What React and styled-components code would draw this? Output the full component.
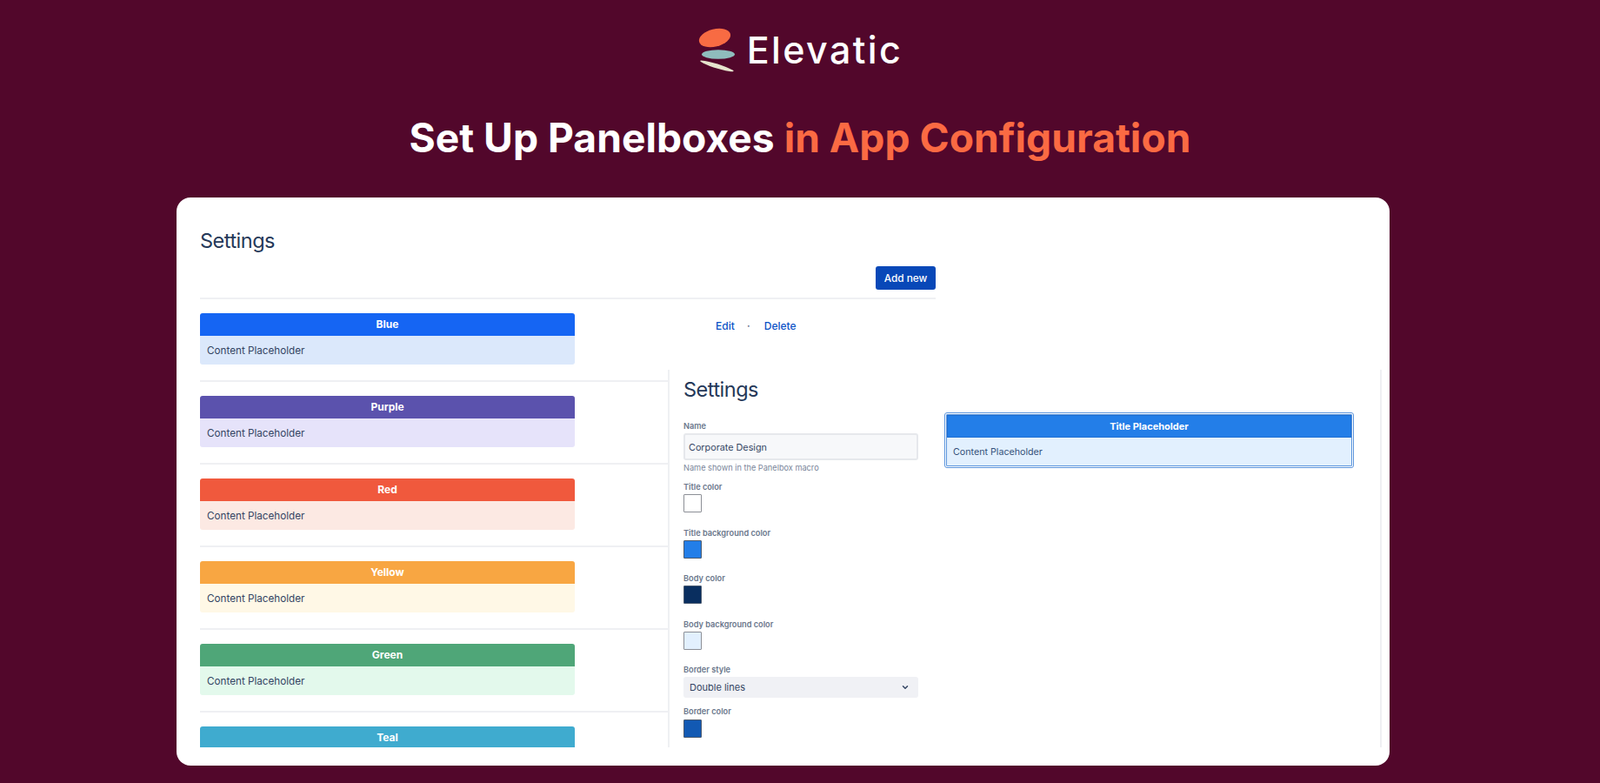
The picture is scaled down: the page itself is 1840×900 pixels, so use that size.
import React from 'react'
import styled, { createGlobalStyle } from 'styled-components'
import { ChevronDown } from 'lucide-react'

const GlobalStyle = createGlobalStyle`
  * {
    box-sizing: border-box;
  }
  html, body {
    margin: 0;
    height: 100%;
    background: #52072b;
    font-family: Inter, 'Liberation Sans', sans-serif;
  }
`

// panelbox colours used in the list, the last row is cut off below its title
const panels = [
  { name: 'Blue', head: '#1565f3', body: '#dbe8fb' },
  { name: 'Purple', head: '#5b52ad', body: '#e6e3fa' },
  { name: 'Red', head: '#f0593d', body: '#fce9e3' },
  { name: 'Yellow', head: '#f8a642', body: '#fff8e6' },
  { name: 'Green', head: '#4fa678', body: '#e3f9ec' },
  { name: 'Teal', head: '#3fabcf' },
]

const swatchesTop = [
  { label: 'Title color', color: '#ffffff', edge: '#8c8f96' },
  { label: 'Title background color', color: '#237ee8', edge: '#4a5a70' },
  { label: 'Body color', color: '#092e5f', edge: '#4a5a70' },
  { label: 'Body background color', color: '#e2f0fe', edge: '#8c8f96' },
]

const Logo = () => (
  <svg width="46" height="58" viewBox="0 0 46 58" aria-hidden="true">
    <ellipse cx="21" cy="15.5" rx="18.5" ry="10" fill="#f86b43" transform="rotate(-14 21 15.5)" />
    <ellipse cx="25" cy="34.5" rx="19" ry="5.2" fill="#8fbdbd" />
    <path d="M5 41.5 C17 42.5 32 47.5 42.5 53 C43 54.5 41 54.5 38 54 C26 52 12 47.5 5 43 C4 42.5 4 41.5 5 41.5 Z" fill="#e6e3cd" />
  </svg>
)

const App = () => {
  return (
    <Page>
      <GlobalStyle />
      <Brand>
        <Logo />
        <BrandName>Elevatic</BrandName>
      </Brand>
      <Headline>
        Set Up Panelboxes <Accent>in App Configuration</Accent>
      </Headline>
      <Card>
        <Viewport>
          <ListPage>
            <PageTitle>Settings</PageTitle>
            <Toolbar>
              <AddButton>Add new</AddButton>
            </Toolbar>
            {panels.map((panel, i) => (
              <Row key={panel.name}>
                <PanelBox>
                  <PanelHead $bg={panel.head}>{panel.name}</PanelHead>
                  {panel.body && <PanelBody $bg={panel.body}>Content Placeholder</PanelBody>}
                </PanelBox>
                {i === 0 && (
                  <Actions>
                    <ActionLink>Edit</ActionLink>
                    <Dot>·</Dot>
                    <ActionLink>Delete</ActionLink>
                  </Actions>
                )}
              </Row>
            ))}
          </ListPage>
        </Viewport>
        <EditPanel>
          <Form>
            <FormTitle>Settings</FormTitle>
            <Label>Name</Label>
            <NameInput readOnly value="Corporate Design" />
            <Helper>Name shown in the Panelbox macro</Helper>
            {swatchesTop.map((s) => (
              <SwatchField key={s.label}>
                <Label>{s.label}</Label>
                <Swatch $color={s.color} $edge={s.edge} />
              </SwatchField>
            ))}
            <Label>Border style</Label>
            <SelectBox>
              Double lines
              <ChevronDown size={10} strokeWidth={3.5} color="#344563" />
            </SelectBox>
            <BorderLabel>Border color</BorderLabel>
            <Swatch $color="#1259b3" $edge="#4a5a70" />
          </Form>
          <Preview>
            <PreviewHead>Title Placeholder</PreviewHead>
            <PreviewBody>Content Placeholder</PreviewBody>
          </Preview>
        </EditPanel>
      </Card>
    </Page>
  )
}

const Page = styled.div`
  width: 1840px;
  height: 900px;
  overflow: hidden;
  background: #52072b;
  padding-top: 28px;
`

const Brand = styled.div`
  display: flex;
  align-items: center;
  justify-content: center;
  gap: 12px;
  height: 58px;
  padding-right: 1px;
`

const BrandName = styled.div`
  color: #ffffff;
  font-size: 43px;
  font-weight: 500;
  letter-spacing: 2.4px;
  line-height: 58px;
`

const Headline = styled.h1`
  margin: 42px 0 0;
  height: 60px;
  text-align: center;
  color: #ffffff;
  font-size: 46.2px;
  font-weight: 700;
  line-height: 60px;
`

const Accent = styled.span`
  color: #fb6a43;
`

const Card = styled.div`
  position: relative;
  width: 1395px;
  height: 653px;
  margin: 39px 0 0 203px;
  padding: 0 27px 21px;
  background: #ffffff;
  border-radius: 16px;
`

const Viewport = styled.div`
  height: 632px;
  overflow: hidden;
`

const ListPage = styled.div`
  width: 846px;
`

const PageTitle = styled.div`
  padding-top: 35px;
  height: 79px;
  color: #253858;
  font-size: 23.5px;
  letter-spacing: -0.5px;
  line-height: 30px;
`

const Toolbar = styled.div`
  display: flex;
  justify-content: flex-end;
  height: 38px;
  border-bottom: 2px solid #eff0f3;
`

const AddButton = styled.button`
  width: 69px;
  height: 27px;
  padding: 0;
  border: 0;
  border-radius: 3px;
  background: #0848b8;
  color: #ffffff;
  font-family: inherit;
  font-size: 11.8px;
  font-weight: 500;
`

const Row = styled.div`
  display: flex;
  align-items: flex-start;
  height: 95px;
  padding-top: 16px;
  border-bottom: 2px solid #eff0f3;
`

const PanelBox = styled.div`
  width: 431px;
  height: 59px;
  flex: none;
  border-radius: 3px;
  overflow: hidden;
`

const PanelHead = styled.div`
  height: 26px;
  background: ${(p) => p.$bg};
  color: #ffffff;
  font-size: 12px;
  font-weight: 700;
  line-height: 26px;
  text-align: center;
`

const PanelBody = styled.div`
  height: 33px;
  padding-left: 8px;
  background: ${(p) => p.$bg};
  color: #344563;
  font-size: 11.7px;
  line-height: 34px;
`

const Actions = styled.div`
  display: flex;
  align-items: center;
  height: 28px;
  margin-left: 162px;
  font-size: 12px;
  font-weight: 500;
`

const ActionLink = styled.span`
  color: #0a52c6;
`

const Dot = styled.span`
  width: 34px;
  padding-right: 2px;
  text-align: center;
  color: #5e6c84;
`

const EditPanel = styled.div`
  position: absolute;
  left: 565px;
  top: 198px;
  display: flex;
  width: 821px;
  height: 434px;
  padding-left: 16px;
  background: #ffffff;
  border-left: 2px solid #eff0f3;
  border-right: 2px solid #eff0f3;
`

const Form = styled.div`
  width: 270px;
  flex: none;
`

const FormTitle = styled.div`
  margin: 8px 0 19px;
  color: #253858;
  font-size: 23.5px;
  letter-spacing: -0.5px;
  line-height: 30px;
`

const Label = styled.div`
  height: 14px;
  margin-bottom: 2px;
  color: #6b778c;
  font-size: 9.2px;
  font-weight: 600;
  line-height: 15px;
`

const NameInput = styled.input`
  display: block;
  width: 270px;
  height: 31px;
  padding: 1px 4px 0;
  background: #f7f8fa;
  border: 2px solid #e6e8ec;
  border-radius: 3px;
  color: #344563;
  font-family: inherit;
  font-size: 10.8px;
  outline: none;
`

const Helper = styled.div`
  height: 14px;
  margin: 2px 0 7px;
  color: #7a869a;
  font-size: 9.2px;
  line-height: 14px;
`

const SwatchField = styled.div`
  height: 52.5px;
`

const Swatch = styled.div`
  width: 21px;
  height: 21px;
  background: ${(p) => p.$color};
  border: 1px solid ${(p) => p.$edge};
  border-radius: 1px;
`

const SelectBox = styled.div`
  display: flex;
  align-items: center;
  justify-content: space-between;
  width: 270px;
  height: 24px;
  padding: 0 10px 0 7px;
  background: #f0f1f5;
  border-radius: 3px;
  color: #344563;
  font-size: 11px;
`

const BorderLabel = styled(Label)`
  margin: 8px 0 3px;
`

const Preview = styled.div`
  width: 471px;
  height: 64px;
  margin: 49px 0 0 30px;
  border: 3px double #5c95dc;
  border-radius: 3px;
  overflow: hidden;
  flex: none;
`

const PreviewHead = styled.div`
  height: 26px;
  background: #237ee8;
  border: 1px solid #1f6fd2;
  color: #ffffff;
  font-size: 11px;
  font-weight: 700;
  line-height: 24px;
  text-align: center;
`

const PreviewBody = styled.div`
  height: 32px;
  padding-left: 7px;
  background: #e2f0fe;
  color: #34507a;
  font-size: 10.7px;
  line-height: 33px;
`

export default App
